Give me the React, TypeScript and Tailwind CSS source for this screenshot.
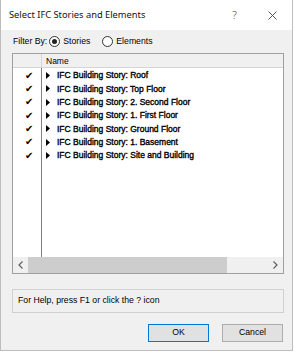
const rows = [
  "Roof",
  "Top Floor",
  "2. Second Floor",
  "1. First Floor",
  "Ground Floor",
  "1. Basement",
  "Site and Building",
];

function Radio({ checked }: { checked: boolean }) {
  return (
    <span className="flex h-[11px] w-[11px] items-center justify-center rounded-full border border-[#333] bg-white">
      {checked && <span className="h-[5px] w-[5px] rounded-full bg-[#222]" />}
    </span>
  );
}

export default function App() {
  return (
    <div className="h-[355px] w-[295px] bg-white font-['Liberation_Sans',Arial,sans-serif] text-[8.7px] text-black">
      <div className="flex h-[351px] w-[293px] flex-col border-x border-b border-[#bdbdbd] bg-[#f0f0f0]">
        {/* title bar */}
        <div className="flex h-[30px] items-center bg-white pl-[8px] pr-[15px] font-['Noto_Sans',sans-serif] text-[9.3px] text-[#111]">
          <span className="flex-1">Select IFC Stories and Elements</span>
          <span className="mr-[31px] text-[11px] font-light text-[#555]">?</span>
          <svg width="9" height="9" viewBox="0 0 9 9" className="text-[#444]">
            <path d="M0.5 0.5 L8.5 8.5 M8.5 0.5 L0.5 8.5" stroke="currentColor" strokeWidth="0.9" />
          </svg>
        </div>

        {/* filter */}
        <div className="mt-[3px] flex h-[18px] items-center pl-[12px]">
          <span>Filter By:</span>
          <span className="ml-[2px] flex items-center gap-[3px]">
            <Radio checked />
            <span>Stories</span>
          </span>
          <span className="ml-[12px] flex items-center gap-[3px]">
            <Radio checked={false} />
            <span>Elements</span>
          </span>
        </div>

        {/* list */}
        <div className="ml-[11px] mt-[2px] flex h-[221px] w-[272px] flex-col border border-[#a0a0a0] bg-white">
          <div className="flex h-[14px] border-b border-[#d5d5d5] bg-[#f0f0f0] text-[8.5px]">
            <div className="w-[29px] border-r border-[#d5d5d5]" />
            <div className="flex items-end pl-[4px] leading-[12px]">Name</div>
          </div>
          <div className="flex flex-1">
            <div className="w-[29px] border-r border-[#808080] pt-[1px]">
              {rows.map((r) => (
                <div key={r} className="flex h-[13.33px] items-center justify-center pl-[3px] text-[10px] leading-none">
                  ✔
                </div>
              ))}
            </div>
            <div className="flex-1 pt-[1px]">
              {rows.map((r) => (
                <div
                  key={r}
                  className="flex h-[13.33px] items-center gap-[7px] pl-[4px] text-[8.5px] [-webkit-text-stroke:0.35px_#000]"
                >
                  <svg width="4" height="7" viewBox="0 0 4 7">
                    <path d="M0 0 L4 3.5 L0 7 Z" fill="#000" />
                  </svg>
                  <span>IFC Building Story: {r}</span>
                </div>
              ))}
            </div>
          </div>
          {/* horizontal scrollbar */}
          <div className="flex h-[16px] items-center bg-[#f0f0f0]">
            <div className="flex w-[15px] items-center justify-center">
              <svg width="5" height="8" viewBox="0 0 5 8">
                <path d="M4.5 0.5 L1 4 L4.5 7.5" fill="none" stroke="#606060" strokeWidth="1.2" />
              </svg>
            </div>
            <div className="h-[16px] w-[199px] bg-[#cdcdcd]" />
            <div className="flex-1" />
            <div className="flex w-[15px] items-center justify-center">
              <svg width="5" height="8" viewBox="0 0 5 8">
                <path d="M0.5 0.5 L4 4 L0.5 7.5" fill="none" stroke="#606060" strokeWidth="1.2" />
              </svg>
            </div>
          </div>
        </div>

        {/* help */}
        <div className="ml-[11px] mt-[15px] flex h-[24px] w-[272px] items-center border border-[#d0d0d0] pl-[5px]">
          For Help, press F1 or click the ? icon
        </div>

        {/* buttons */}
        <div className="mt-[11px] flex justify-end gap-[13px] pr-[9px]">
          <button className="h-[18px] w-[61px] border border-[#0078d7] bg-[#e1e1e1] text-[8.7px]">OK</button>
          <button className="h-[18px] w-[61px] border border-[#adadad] bg-[#e1e1e1] text-[8.7px]">Cancel</button>
        </div>
      </div>
    </div>
  );
}
